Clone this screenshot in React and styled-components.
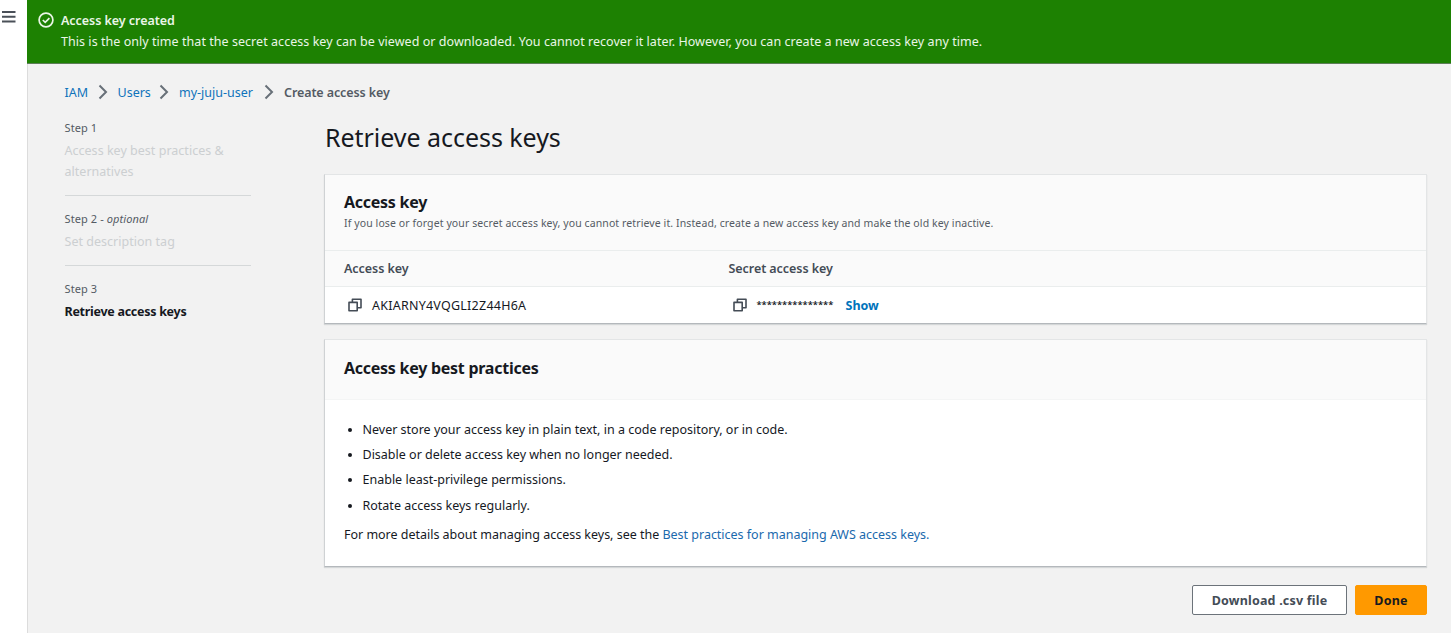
import React from "react";
import styled, { createGlobalStyle } from "styled-components";

const GlobalStyle = createGlobalStyle`
  *, *::before, *::after { box-sizing: border-box; }
  body {
    margin: 0;
    background: #f2f2f2;
    color: #16191f;
    font-family: "Noto Sans", "Open Sans", sans-serif;
    font-size: 12.5px;
  }
  h1, h2, p, ul, ol { margin: 0; padding: 0; }
`;

const Page = styled.div`
  display: flex;
  width: 100%;
  height: 633px;
  overflow: hidden;
`;

const Rail = styled.aside`
  flex: none;
  width: 28px;
  background: #fff;
  border-right: 1px solid #dcdcdc;
  padding: 10px 0 0 2px;
`;

const MenuIcon = styled.svg`
  display: block;
`;

const Content = styled.div`
  flex: 1;
  min-width: 0;
`;

const Banner = styled.div`
  display: flex;
  gap: 7px;
  height: 64px;
  margin-left: -1px;
  padding: 11px 0 0 11px;
  background: #1d8102;
  border-bottom: 1px solid #5d7d58;
  color: #eaf6e7;
`;

const BannerIcon = styled.svg`
  flex: none;
  margin-top: 1px;
`;

const BannerTitle = styled.div`
  font-size: 12.5px;
  font-weight: 600;
  line-height: 20px;
  letter-spacing: -0.05px;
`;

const BannerText = styled.div`
  line-height: 21px;
  letter-spacing: 0.045px;
  white-space: nowrap;
`;

const Crumbs = styled.nav`
  display: flex;
  align-items: center;
  height: 20px;
  margin: 18px 0 0 36.5px;
`;

const Crumb = styled.a`
  color: ${(p) => (p.$current ? "#545b64" : "#0f73bb")};
  font-weight: ${(p) => (p.$current ? 600 : 400)};
  letter-spacing: ${(p) => (p.$current ? "-0.1px" : "0")};
  width: ${(p) => p.$width}px;
  white-space: nowrap;
`;

const Chevron = styled.svg`
  flex: none;
  margin: 0 10px 0 9.5px;
`;

const Body = styled.div`
  display: flex;
  padding: 0 24px 0 36.5px;
`;

const Steps = styled.ol`
  flex: none;
  width: 186px;
  margin-right: 73.5px;
  padding-top: 16px;
  list-style: none;
`;

const Step = styled.li`
  padding-bottom: 13px;
  margin-bottom: 13.5px;
  border-bottom: ${(p) => (p.$last ? "0" : "1px solid #d5d8d9")};
`;

const StepLabel = styled.div`
  font-size: 11px;
  line-height: 20px;
  letter-spacing: 0.1px;
  color: #545b64;
`;

const StepName = styled.div`
  margin-top: 1.5px;
  line-height: 21px;
  color: ${(p) => (p.$active ? "#16191f" : "#cccfd1")};
  font-weight: ${(p) => (p.$active ? 700 : 400)};
  letter-spacing: ${(p) => (p.$active ? "-0.28px" : "0.02px")};
`;

const Main = styled.main`
  flex: 1;
  min-width: 0;
`;

const Title = styled.h1`
  height: 72px;
  padding: 16.5px 0 0 1px;
  font-size: 25px;
  font-weight: 400;
  line-height: 36px;
  letter-spacing: -0.04px;
`;

const Card = styled.section`
  background: #fff;
  border: 1px solid #e3e5e6;
  border-left-color: #cfd2d4;
  border-bottom-color: #b4b8bc;
  box-shadow: 0 1px 1px rgba(0, 28, 36, 0.12);
  height: ${(p) => p.$height}px;
  margin-bottom: ${(p) => p.$gap}px;
`;

const CardHeader = styled.header`
  height: ${(p) => p.$height}px;
  padding: ${(p) => p.$top}px 19px 0;
  background: #fafafa;
  border-bottom: 1px solid ${(p) => p.$line || "#eaeded"};
`;

const CardTitle = styled.h2`
  font-size: 16px;
  font-weight: 700;
  line-height: 22px;
  letter-spacing: -0.26px;
`;

const CardHint = styled.p`
  font-size: 10.5px;
  line-height: 20px;
  letter-spacing: 0.105px;
  color: #545b64;
`;

const Row = styled.div`
  display: grid;
  grid-template-columns: 384.5px 1fr;
  align-items: center;
  height: 36px;
  padding-left: 19px;
  background: ${(p) => (p.$head ? "#fafafa" : "#fff")};
  border-bottom: ${(p) => (p.$head ? "1px solid #eaeded" : "0")};
`;

const HeadCell = styled.div`
  font-weight: 600;
  letter-spacing: -0.06px;
  color: #444c56;
`;

const Cell = styled.div`
  display: flex;
  align-items: center;
  padding-left: 4px;
`;

const CopyIcon = styled.svg`
  flex: none;
  margin-right: 10px;
`;

const Mask = styled.span`
  width: 89px;
  font-size: 9.4px;
  font-weight: 600;
  line-height: 14px;
`;

const KeyValue = styled.span`
  font-size: 12.5px;
  letter-spacing: 0.24px;
`;

const Link = styled.a`
  color: ${(p) => (p.$strong ? "#0073bb" : "#1a69ad")};
  font-weight: ${(p) => (p.$strong ? 700 : 400)};
`;

const Practices = styled.ul`
  padding: 17px 0 0 37.5px;
  line-height: 25.2px;
`;

const More = styled.p`
  padding: 5px 19px 0;
  line-height: 24px;
  letter-spacing: -0.015px;
`;

const Actions = styled.div`
  display: flex;
  justify-content: flex-end;
  gap: 8px;
`;

const Button = styled.button`
  width: ${(p) => p.$width}px;
  height: 30px;
  padding: 0;
  border: 1px solid ${(p) => (p.$primary ? "#ff9900" : "#6c737a")};
  border-radius: 2px;
  background: ${(p) => (p.$primary ? "#ff9900" : "#fff")};
  color: ${(p) => (p.$primary ? "#16191f" : "#444c56")};
  font: 700 12.5px "Noto Sans", sans-serif;
  letter-spacing: 0.2px;
`;

const Separator = () => (
  <Chevron width="10" height="16" viewBox="0 0 10 16" fill="none" stroke="#687078" strokeWidth="2">
    <path d="M1.5 1.5 8 8l-6.5 6.5" />
  </Chevron>
);

const Copy = () => (
  <CopyIcon width="14" height="14" viewBox="0 0 14 14" fill="none" stroke="#444c56" strokeWidth="1.6" strokeLinejoin="round">
    <path d="M1 4.4h8.2v8.4H1zM4.4 4.2V1.2h8.6v8.6H9.4" />
  </CopyIcon>
);

const practices = [
  "Never store your access key in plain text, in a code repository, or in code.",
  "Disable or delete access key when no longer needed.",
  "Enable least-privilege permissions.",
  "Rotate access keys regularly.",
];

export default function App() {
  return (
    <>
      <GlobalStyle />
      <Page>
        <Rail>
          <MenuIcon width="14" height="13" viewBox="0 0 14 13" stroke="#4a5058" strokeWidth="2">
            <path d="M0 2h13.5M0 6.7h13.5M0 11.4h13.5" />
          </MenuIcon>
        </Rail>
        <Content>
          <Banner>
            <BannerIcon width="16" height="16" viewBox="0 0 16 16" fill="none" stroke="currentColor" strokeWidth="1.7">
              <circle cx="8" cy="8" r="6.9" />
              <path d="m4.8 8 2.4 2.3 4.2-4.2" />
            </BannerIcon>
            <div>
              <BannerTitle>Access key created</BannerTitle>
              <BannerText>
                This is the only time that the secret access key can be viewed or downloaded. You cannot recover it
                later. However, you can create a new access key any time.
              </BannerText>
            </div>
          </Banner>
          <Crumbs>
            <Crumb $width={23.5}>IAM</Crumb>
            <Separator />
            <Crumb $width={32}>Users</Crumb>
            <Separator />
            <Crumb $width={75.5}>my-juju-user</Crumb>
            <Separator />
            <Crumb $current $width={110}>Create access key</Crumb>
          </Crumbs>
          <Body>
            <Steps>
              <Step>
                <StepLabel>Step 1</StepLabel>
                <StepName>Access key best practices &amp; alternatives</StepName>
              </Step>
              <Step>
                <StepLabel>
                  Step 2 - <em>optional</em>
                </StepLabel>
                <StepName>Set description tag</StepName>
              </Step>
              <Step $last>
                <StepLabel>Step 3</StepLabel>
                <StepName $active>Retrieve access keys</StepName>
              </Step>
            </Steps>
            <Main>
              <Title>Retrieve access keys</Title>
              <Card $height={150} $gap={15}>
                <CardHeader $height={76} $top={16}>
                  <CardTitle>Access key</CardTitle>
                  <CardHint>
                    If you lose or forget your secret access key, you cannot retrieve it. Instead, create a new access
                    key and make the old key inactive.
                  </CardHint>
                </CardHeader>
                <Row $head>
                  <HeadCell>Access key</HeadCell>
                  <HeadCell>Secret access key</HeadCell>
                </Row>
                <Row>
                  <Cell>
                    <Copy />
                    <KeyValue>AKIARNY4VQGLI2Z44H6A</KeyValue>
                  </Cell>
                  <Cell>
                    <Copy />
                    <Mask>***************</Mask>
                    <Link $strong>Show</Link>
                  </Cell>
                </Row>
              </Card>
              <Card $height={228} $gap={18}>
                <CardHeader $height={60} $top={17} $line="#f4f5f5">
                  <CardTitle>Access key best practices</CardTitle>
                </CardHeader>
                <Practices>
                  {practices.map((text) => (
                    <li key={text}>{text}</li>
                  ))}
                </Practices>
                <More>
                  For more details about managing access keys, see the{" "}
                  <Link>Best practices for managing AWS access keys.</Link>
                </More>
              </Card>
              <Actions>
                <Button $width={155}>Download .csv file</Button>
                <Button $primary $width={72}>Done</Button>
              </Actions>
            </Main>
          </Body>
        </Content>
      </Page>
    </>
  );
}
